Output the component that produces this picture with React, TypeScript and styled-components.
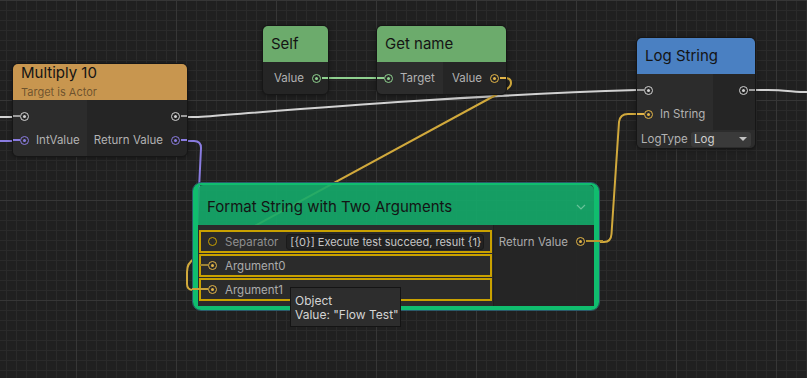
import React from "react";
import styled, { createGlobalStyle, css } from "styled-components";

const EXEC = "#d2d2d2";
const EXEC_STUB = "#9c9c9c";
const PURPLE = "#8a7ce0";
const GREEN = "#8fd18f";
const YELLOW = "#e3b548";

const GlobalStyle = createGlobalStyle`
  html, body {
    margin: 0;
    padding: 0;
    background: #202020;
  }
  body {
    font-family: Inter, "Noto Sans", sans-serif;
  }
`;

const Canvas = styled.div`
  position: relative;
  width: 807px;
  height: 378px;
  overflow: hidden;
  background-color: #202020;
  background-image: linear-gradient(90deg, #363636 1px, transparent 1px),
    linear-gradient(180deg, #363636 1px, transparent 1px),
    linear-gradient(90deg, #2a2a2a 1px, transparent 1px),
    linear-gradient(180deg, #2a2a2a 1px, transparent 1px);
  background-size: 100px 100px, 100px 100px, 10px 10px, 10px 10px;
  background-position: 76px 0, 0 0, 6px 0, 0 0;
`;

const Wires = styled.svg`
  position: absolute;
  left: 0;
  top: 0;
  z-index: 0;

  path {
    fill: none;
    stroke-width: 2;
    stroke-linecap: round;
    stroke-linejoin: round;
  }
`;

const Node = styled.div<{ $x: number; $y: number; $w: number }>`
  position: absolute;
  left: ${(p) => p.$x}px;
  top: ${(p) => p.$y}px;
  width: ${(p) => p.$w}px;
  box-sizing: border-box;
  border: 1px solid #161616;
  border-radius: 6px;
  background: #252525;
  box-shadow: 0 1px 4px rgba(0, 0, 0, 0.35);
  overflow: hidden;
  z-index: 1;
  font-size: 11.5px;
  color: #b2b2b2;
`;

const NodeHeader = styled.div<{ $bg: string; $withSub?: boolean }>`
  height: 36px;
  box-sizing: border-box;
  padding: 0 8px;
  background: ${(p) => p.$bg};
  display: flex;
  flex-direction: column;
  justify-content: ${(p) => (p.$withSub ? "flex-start" : "center")};
`;

const NodeTitle = styled.div`
  font-size: 15px;
  line-height: 18px;
  color: #141414;
  white-space: nowrap;
`;

const NodeSubtitle = styled.div`
  margin-top: 4px;
  font-size: 11px;
  line-height: 13px;
  color: rgba(30, 24, 16, 0.55);
`;

const NodeBody = styled.div`
  display: flex;
`;

const InputColumn = styled.div<{ $w: number }>`
  width: ${(p) => p.$w}px;
  flex: none;
  padding: 4px 0;
  background: #2c2c2c;
  display: flex;
  flex-direction: column;
`;

const OutputColumn = styled.div`
  flex: 1;
  padding: 4px 0;
  display: flex;
  flex-direction: column;
  align-items: flex-end;
`;

const PortRow = styled.div<{ $side: "in" | "out" }>`
  height: 24px;
  display: flex;
  align-items: center;
  white-space: nowrap;
  ${(p) =>
    p.$side === "in"
      ? css`
          padding-left: 7px;
          gap: 7px;
        `
      : css`
          padding-right: 7px;
          gap: 8px;
        `}
`;

type PortProps = {
  $color: string;
  $hollow?: boolean;
  $stub?: "in" | "out";
  $stubLen?: number;
  $stubColor?: string;
};

const Port = styled.span<PortProps>`
  position: relative;
  flex: none;
  box-sizing: border-box;
  width: 9px;
  height: 9px;
  border: 1.5px solid ${(p) => p.$color};
  border-radius: 50%;
  display: flex;
  align-items: center;
  justify-content: center;

  &::after {
    content: "";
    width: 3px;
    height: 3px;
    border-radius: 50%;
    background: ${(p) => (p.$hollow ? "transparent" : p.$color)};
  }

  ${(p) =>
    p.$stub &&
    css`
      &::before {
        content: "";
        position: absolute;
        top: 2px;
        height: 2px;
        width: ${p.$stubLen ?? 7}px;
        background: ${p.$stubColor ?? p.$color};
        ${p.$stub === "in"
          ? "right: calc(100% + 1.5px);"
          : "left: calc(100% + 1.5px);"}
      }
    `}
`;

const NodeFooter = styled.div`
  height: 18px;
  padding: 0 4px;
  display: flex;
  align-items: center;
  justify-content: space-between;
  background: #2c2c2c;
`;

const Dropdown = styled.div`
  width: 60px;
  height: 15px;
  box-sizing: border-box;
  padding: 0 4px 0 3px;
  border-radius: 3px;
  background: #3a3a3a;
  color: #d0d0d0;
  display: flex;
  align-items: center;
  justify-content: space-between;
`;

const DropdownArrow = styled.span`
  width: 0;
  height: 0;
  border-left: 4px solid transparent;
  border-right: 4px solid transparent;
  border-top: 4px solid #c2c2c2;
`;

/* Format String node (selected) */

const FormatFrame = styled.div`
  position: absolute;
  left: 192px;
  top: 182px;
  width: 408px;
  box-sizing: border-box;
  border: 1px solid #2b5b6b;
  border-radius: 9px;
  z-index: 1;
  font-size: 11.5px;
  color: #ababab;
`;

const FormatInner = styled.div`
  border: 5px solid #10bd6e;
  border-top-width: 2px;
  border-bottom-width: 4px;
  border-radius: 8px;
`;

const FormatHeader = styled.div`
  height: 40px;
  box-sizing: border-box;
  padding: 3px 8px 0 9px;
  border-radius: 5px 5px 0 0;
  background: rgba(20, 171, 106, 0.9);
  display: flex;
  align-items: center;
  justify-content: space-between;
`;

const FormatBody = styled.div`
  display: flex;
  background: rgba(37, 37, 37, 0.96);
`;

const FormatInputs = styled.div`
  width: 295px;
  flex: none;
  box-sizing: border-box;
  padding: 5px 1px;
  display: flex;
  flex-direction: column;
  gap: 1px;
  background: rgba(43, 43, 43, 0.95);
`;

const FormatOutputs = styled.div`
  flex: 1;
  min-width: 0;
  padding: 5px 0;
  border-left: 1px solid #1f1f1f;
  display: flex;
  flex-direction: column;
  align-items: flex-end;
`;

const ArgRow = styled.div`
  height: 23px;
  box-sizing: border-box;
  border: 2px solid #c9a100;
  padding: 0 6px 0 7px;
  display: flex;
  align-items: center;
  gap: 8px;
  white-space: nowrap;
`;

const ArgLabel = styled.span<{ $dim?: boolean }>`
  color: ${(p) => (p.$dim ? "#8f8f8f" : "#ababab")};
`;

const TextField = styled.div`
  flex: 1;
  min-width: 0;
  height: 16px;
  box-sizing: border-box;
  padding: 0 3px;
  border: 1px solid #1a1a1a;
  border-radius: 3px;
  background: #222222;
  color: #c6c6c6;
  font-size: 11px;
  line-height: 14px;
  overflow: hidden;
`;

const OutRow = styled.div`
  height: 23px;
  padding-right: 9px;
  display: flex;
  align-items: center;
  gap: 8px;
  white-space: nowrap;
`;

const Tooltip = styled.div`
  position: absolute;
  left: 290px;
  top: 287px;
  width: 111px;
  box-sizing: border-box;
  padding: 6px 4px 4px 4px;
  border: 1px solid #141414;
  background: #2d2d2d;
  color: #d4d4d4;
  font-size: 12px;
  line-height: 14px;
  white-space: nowrap;
  z-index: 3;
`;

function Chevron() {
  return (
    <svg width="10" height="6" viewBox="0 0 10 6">
      <polyline
        points="1,1 5,5 9,1"
        fill="none"
        stroke="rgba(205,240,220,0.45)"
        strokeWidth="1.2"
      />
    </svg>
  );
}

export default function App() {
  return (
    <>
      <GlobalStyle />
      <Canvas>
        <Wires width="807" height="378">
          <path d="M0 117 L13 117" stroke={EXEC} />
          <path d="M0 141 L13 141" stroke={PURPLE} />
          <path d="M186 117 L198 117 C 290 110, 450 96, 637 90" stroke={EXEC} />
          <path d="M754 90 L768 90 C 785 90, 795 92, 807 92" stroke={EXEC} />
          <path d="M186 141 L194 141 Q201 141 201 148 L197 230" stroke={PURPLE} />
          <path d="M327 78 L377 78" stroke={GREEN} />
          <path
            d="M505 78 Q511 78 511 83 Q511 87 505 90 L194 259 Q187 263 187 272 L187 284 Q187 290 193 290"
            stroke="#d1a93c"
          />
          <path
            d="M598 242 L604 242 Q611 242 611.5 234 L619 122 Q620 114 628 114 L637 114"
            stroke="#d1a93c"
          />
        </Wires>

        <Node $x={12} $y={63} $w={176}>
          <NodeHeader $bg="#c8964f" $withSub>
            <NodeTitle>Multiply 10</NodeTitle>
            <NodeSubtitle>Target is Actor</NodeSubtitle>
          </NodeHeader>
          <NodeBody>
            <InputColumn $w={74}>
              <PortRow $side="in">
                <Port $color={EXEC} $stub="in" $stubColor={EXEC_STUB} />
              </PortRow>
              <PortRow $side="in">
                <Port $color={PURPLE} $stub="in" />
                <span>IntValue</span>
              </PortRow>
            </InputColumn>
            <OutputColumn>
              <PortRow $side="out">
                <Port $color={EXEC} $stub="out" $stubColor={EXEC_STUB} />
              </PortRow>
              <PortRow $side="out">
                <span>Return Value</span>
                <Port $color={PURPLE} $stub="out" />
              </PortRow>
            </OutputColumn>
          </NodeBody>
        </Node>

        <Node $x={262} $y={25} $w={67}>
          <NodeHeader $bg="#6cab6c">
            <NodeTitle>Self</NodeTitle>
          </NodeHeader>
          <NodeBody>
            <OutputColumn>
              <PortRow $side="out">
                <span>Value</span>
                <Port $color={GREEN} $stub="out" />
              </PortRow>
            </OutputColumn>
          </NodeBody>
        </Node>

        <Node $x={376} $y={25} $w={131}>
          <NodeHeader $bg="#6cab6c">
            <NodeTitle>Get name</NodeTitle>
          </NodeHeader>
          <NodeBody>
            <InputColumn $w={66}>
              <PortRow $side="in">
                <Port $color={GREEN} $stub="in" />
                <span>Target</span>
              </PortRow>
            </InputColumn>
            <OutputColumn>
              <PortRow $side="out">
                <span>Value</span>
                <Port $color={YELLOW} $stub="out" />
              </PortRow>
            </OutputColumn>
          </NodeBody>
        </Node>

        <Node $x={636} $y={37} $w={120}>
          <NodeHeader $bg="#4a80c2">
            <NodeTitle>Log String</NodeTitle>
          </NodeHeader>
          <NodeBody>
            <InputColumn $w={76}>
              <PortRow $side="in">
                <Port $color={EXEC} $stub="in" $stubColor={EXEC_STUB} />
              </PortRow>
              <PortRow $side="in">
                <Port $color={YELLOW} $stub="in" />
                <span>In String</span>
              </PortRow>
            </InputColumn>
            <OutputColumn>
              <PortRow $side="out">
                <Port $color={EXEC} $stub="out" $stubColor={EXEC_STUB} />
              </PortRow>
            </OutputColumn>
          </NodeBody>
          <NodeFooter>
            <span>LogType</span>
            <Dropdown>
              <span>Log</span>
              <DropdownArrow />
            </Dropdown>
          </NodeFooter>
        </Node>

        <FormatFrame>
          <FormatInner>
            <FormatHeader>
              <NodeTitle>Format String with Two Arguments</NodeTitle>
              <Chevron />
            </FormatHeader>
            <FormatBody>
              <FormatInputs>
                <ArgRow>
                  <Port $color="#c9a100" $hollow />
                  <ArgLabel $dim>Separator</ArgLabel>
                  <TextField>[{"{0}"}] Execute test succeed, result {"{1}"}</TextField>
                </ArgRow>
                <ArgRow>
                  <Port $color={YELLOW} $stub="in" $stubLen={8} $stubColor="#9c8236" />
                  <ArgLabel>Argument0</ArgLabel>
                </ArgRow>
                <ArgRow>
                  <Port $color={YELLOW} $stub="in" $stubLen={16} $stubColor="#c9a23a" />
                  <ArgLabel>Argument1</ArgLabel>
                </ArgRow>
              </FormatInputs>
              <FormatOutputs>
                <OutRow>
                  <span>Return Value</span>
                  <Port $color={YELLOW} $stub="out" $stubLen={17} $stubColor="#b8952f" />
                </OutRow>
              </FormatOutputs>
            </FormatBody>
          </FormatInner>
        </FormatFrame>

        <Tooltip>
          <div>Object</div>
          <div>Value: "Flow Test"</div>
        </Tooltip>
      </Canvas>
    </>
  );
}
